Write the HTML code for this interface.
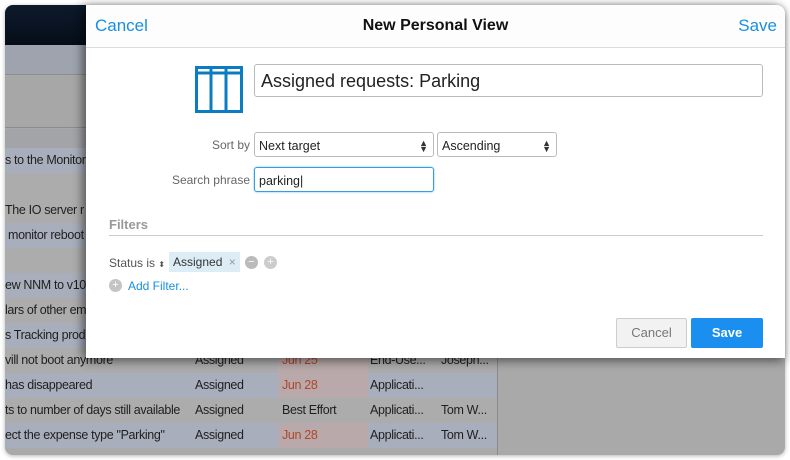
<!DOCTYPE html>
<html><head><style>
*{box-sizing:border-box;margin:0;padding:0}
body{width:790px;height:460px;background:#fff;font-family:"Liberation Sans",sans-serif;position:relative;overflow:hidden}
#frame{position:absolute;left:5px;top:5px;width:780px;height:450px;border-radius:8px;overflow:hidden;background:#a9a9a9;box-shadow:0 1px 4px rgba(0,0,0,.3)}
.top{position:absolute;left:0;top:0;width:780px;height:40px;background:linear-gradient(#0d1a2d,#070d18)}
.b1{position:absolute;left:0;top:40px;width:780px;height:30px;background:#9ea3ad;border-bottom:1px solid #8c8c8c}
.b2{position:absolute;left:0;top:71px;width:780px;height:52px;background:#a7a7a7;border-bottom:1px solid #8c8c8c}
.b3{position:absolute;left:0;top:124px;width:780px;height:19px;background:#a2a4a8}
.row{position:absolute;left:0;width:492px;height:25px;font-size:12.5px;letter-spacing:-0.35px;color:#1f1f1f;line-height:25px;white-space:nowrap;overflow:hidden}
.row span{position:absolute;top:0}
.bl{background:#a8aebb}.gr{background:#acacac}
.red{color:#b0462a}
.rc{position:absolute;left:273px;width:90px;height:25px;background:#b9a9aa}
.vl{position:absolute;left:492px;top:143px;width:1px;height:307px;background:#8a8a8a}
#modal{position:absolute;left:86px;top:5px;width:699px;height:353px;background:#fff;border-radius:0 8px 0 0;box-shadow:-4px 0 10px rgba(0,0,0,.35),0 4px 10px rgba(0,0,0,.3)}
.hdr{height:43px;border-bottom:1px solid #ddd;position:relative;background:#fdfdfd;border-radius:0 8px 0 0}
.hdr .l{position:absolute;left:9px;top:11px;font-size:17px;color:#1a8fe0}
.hdr .r{position:absolute;right:8px;top:11px;font-size:17px;color:#1a8fe0}
.hdr .t{position:absolute;left:0;right:0;top:12px;text-align:center;font-size:16px;font-weight:bold;color:#111}
.inp{position:absolute;border:1px solid #bbb;border-radius:3px;background:#fff}
.lbl{position:absolute;font-size:12px;color:#666;text-align:right}
.sel{font-size:12.5px;color:#222;padding:6px 4px}
.arr{position:absolute;right:5px;top:7px;font-size:9px;line-height:6px;color:#333}
</style></head><body>
<div id="frame">
<div class="top"></div><div class="b1"></div><div class="b2"></div><div class="b3"></div>
<div class="row bl" style="top:143px"><span style="left:0">s to the Monitoring</span></div>
<div class="row gr" style="top:168px"></div>
<div class="row gr" style="top:193px"><span style="left:0">The IO server r</span></div>
<div class="row bl" style="top:218px"><span style="left:3px">monitor reboot</span></div>
<div class="row gr" style="top:243px"></div>
<div class="row bl" style="top:268px"><span style="left:0">ew NNM to v10</span></div>
<div class="row gr" style="top:293px"><span style="left:0">lars of other em</span></div>
<div class="row bl" style="top:318px"><span style="left:0">s Tracking prod</span></div>
<div class="row gr" style="top:343px"><div class="rc"></div><span style="left:0">vill not boot anymore</span><span style="left:190px">Assigned</span><span class="red" style="left:277px">Jun 25</span><span style="left:365px">End-Use...</span><span style="left:436px">Joseph...</span></div>
<div class="row bl" style="top:368px"><div class="rc"></div><span style="left:0">has disappeared</span><span style="left:190px">Assigned</span><span class="red" style="left:277px">Jun 28</span><span style="left:365px">Applicati...</span></div>
<div class="row gr" style="top:393px"><span style="left:0">ts to number of days still available</span><span style="left:190px">Assigned</span><span style="left:277px">Best Effort</span><span style="left:365px">Applicati...</span><span style="left:436px">Tom W...</span></div>
<div class="row bl" style="top:418px"><div class="rc"></div><span style="left:0">ect the expense type "Parking"</span><span style="left:190px">Assigned</span><span class="red" style="left:277px">Jun 28</span><span style="left:365px">Applicati...</span><span style="left:436px">Tom W...</span></div>
<div class="vl"></div>
</div>
<div id="modal">
<div class="hdr"><span class="l">Cancel</span><span class="t">New Personal View</span><span class="r">Save</span></div>
<svg style="position:absolute;left:109px;top:61px" width="48" height="47" viewBox="0 0 48 47"><g fill="none" stroke="#0b7cc2" stroke-width="3"><rect x="1.5" y="1.5" width="45" height="44"/><line x1="2" y1="7" x2="46" y2="7"/><line x1="16" y1="2" x2="16" y2="45"/><line x1="31" y1="2" x2="31" y2="45"/></g></svg>
<div class="inp" style="left:168px;top:59px;width:509px;height:33px;font-size:18px;color:#222;padding:6px 6px">Assigned requests: Parking</div>
<div class="lbl" style="left:60px;top:133px;width:104px">Sort by</div>
<div class="inp sel" style="left:168px;top:127px;width:180px;height:25px">Next target<span class="arr">▲<br>▼</span></div>
<div class="inp sel" style="left:351px;top:127px;width:120px;height:25px">Ascending<span class="arr">▲<br>▼</span></div>
<div class="lbl" style="left:60px;top:168px;width:104px">Search phrase</div>
<div class="inp sel" style="left:168px;top:162px;width:180px;height:25px;border-color:#3a9be0;box-shadow:0 0 2px #7cc0f0">parking|</div>
<div style="position:absolute;left:23px;top:212px;font-size:13px;font-weight:bold;color:#999">Filters</div>
<div style="position:absolute;left:23px;top:230px;width:654px;height:1px;background:#ccc"></div>
<div style="position:absolute;left:23px;top:251px;font-size:12px;color:#555">Status is <span style="font-size:8px">⬍</span></div>
<div style="position:absolute;left:83px;top:247px;width:71px;height:20px;background:#dcedf5;font-size:12px;color:#333;padding:3px 4px">Assigned <span style="color:#999;margin-left:3px">×</span></div>
<div style="position:absolute;left:159px;top:251px;width:13px;height:13px;border-radius:50%;background:#bbb;color:#fff;font-size:11px;line-height:13px;text-align:center">−</div>
<div style="position:absolute;left:178px;top:251px;width:13px;height:13px;border-radius:50%;background:#ccc;color:#fff;font-size:11px;line-height:13px;text-align:center">+</div>
<div style="position:absolute;left:23px;top:274px;width:13px;height:13px;border-radius:50%;background:#c4c4c4;color:#fff;font-size:11px;line-height:13px;text-align:center">+</div>
<div style="position:absolute;left:42px;top:274px;font-size:12px;color:#1a8fe0">Add Filter...</div>
<div style="position:absolute;left:530px;top:313px;width:71px;height:30px;border:1px solid #ccc;border-radius:2px;background:#f2f2f2;color:#777;font-size:13px;text-align:center;line-height:28px">Cancel</div>
<div style="position:absolute;left:605px;top:313px;width:72px;height:30px;border-radius:2px;background:#1a8ff0;color:#fff;font-size:13px;font-weight:bold;text-align:center;line-height:30px">Save</div>
</div>
</body></html>
